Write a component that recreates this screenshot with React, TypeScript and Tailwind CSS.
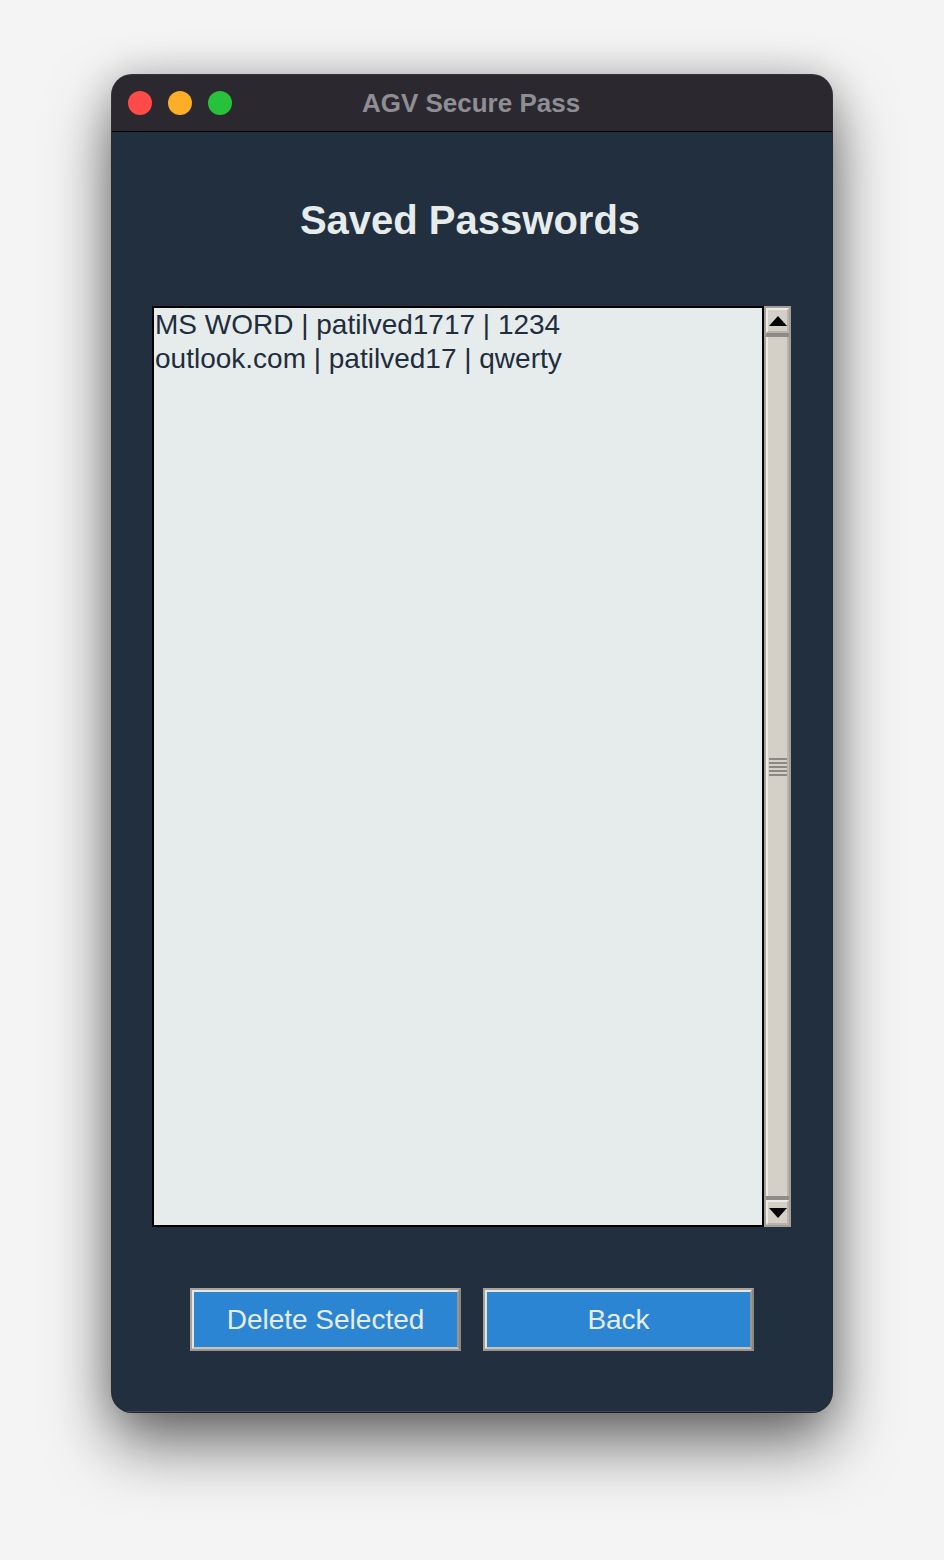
import React from 'react';

const entries = ['MS WORD | patilved1717 | 1234', 'outlook.com | patilved17 | qwerty'];

const ScrollButton: React.FC<{ dir: 'up' | 'down' }> = ({ dir }) => (
    <div className="h-[25px] flex items-center justify-center bg-[#d4d0c8] border-t-2 border-l-2 border-t-[#ecebe6] border-l-[#ecebe6] border-b-2 border-r-2 border-b-[#b8b4ac] border-r-[#b8b4ac]">
        <svg width="18" height="10" viewBox="0 0 18 10">
            {dir === 'up' ? <polygon points="9,0 18,10 0,10" fill="#000" /> : <polygon points="0,0 18,0 9,10" fill="#000" />}
        </svg>
    </div>
);

const TkButton: React.FC<{ label: string }> = ({ label }) => (
    <button className="w-[271px] h-[63px] bg-[#2b85d3] border-2 border-t-[#a7a39b] border-l-[#a7a39b] border-b-[#9a968e] border-r-[#8a8780]">
        <div className="w-full h-full flex items-center justify-center border-t-2 border-l-2 border-t-[#e6e6e2] border-l-[#e6e6e2] border-b-2 border-b-[#c9c5bd] border-r-2 border-r-[#9a968e] text-[28px] text-[#e6ecec]">
            {label}
        </div>
    </button>
);

const App: React.FC = () => {
    return (
        <div className="min-h-[1560px] bg-[#f4f4f4] pt-[75px] pl-[112px] font-['Liberation_Sans',Arial,sans-serif]">
            <div className="w-[720px] rounded-[20px] overflow-hidden bg-[#222f3f] shadow-[0_0_0_1px_rgba(0,0,0,0.75),0_32px_64px_rgba(0,0,0,0.55),0_0_40px_rgba(0,0,0,0.2)]">
                {/* title bar */}
                <div className="relative h-[57px] bg-[#2b292f] border-b border-black flex items-center">
                    <div className="flex gap-[16px] pl-[16px]">
                        <span className="w-[24px] h-[24px] rounded-full bg-[#fe4a48]" />
                        <span className="w-[24px] h-[24px] rounded-full bg-[#fcaf26]" />
                        <span className="w-[24px] h-[24px] rounded-full bg-[#28c13b]" />
                    </div>
                    <div className="absolute inset-0 flex items-center justify-center text-[26px] font-bold text-[#8f8e94] pr-[2px]">
                        AGV Secure Pass
                    </div>
                </div>

                <div className="flex flex-col items-center pt-[64px] pb-[60px] border-b border-[#3d4a5a]">
                    <h1 className="text-[40px] leading-[48px] font-bold text-[#e6ecec] pr-[4px]">Saved Passwords</h1>

                    <div className="mt-[62px] flex h-[921px] self-start ml-[40px]">
                        <div className="w-[612px] h-full bg-[#e6ecec] border-2 border-black text-[28px] leading-[34px] text-[#1f2d3d] pl-[1px]">
                            {entries.map((e) => (
                                <div key={e} className="whitespace-nowrap">{e}</div>
                            ))}
                        </div>
                        <div className="w-[27px] h-full flex flex-col bg-[#8e8c85] border-2 border-[#a4a098]">
                            <ScrollButton dir="up" />
                            <div className="h-[4px]" />
                            <div className="flex-1 bg-[#d4d0c8] border-l-2 border-[#ecebe6] border-r-2 border-r-[#b8b4ac] flex flex-col items-center justify-center gap-[2px]">
                                {[0, 1, 2, 3, 4].map((i) => (
                                    <div key={i} className="w-[18px] h-[2px] bg-[#8a8880]" />
                                ))}
                            </div>
                            <div className="h-[4px]" />
                            <ScrollButton dir="down" />
                        </div>
                    </div>

                    <div className="mt-[61px] flex gap-[22px]">
                        <TkButton label="Delete Selected" />
                        <TkButton label="Back" />
                    </div>
                </div>
            </div>
        </div>
    );
};

export default App;
